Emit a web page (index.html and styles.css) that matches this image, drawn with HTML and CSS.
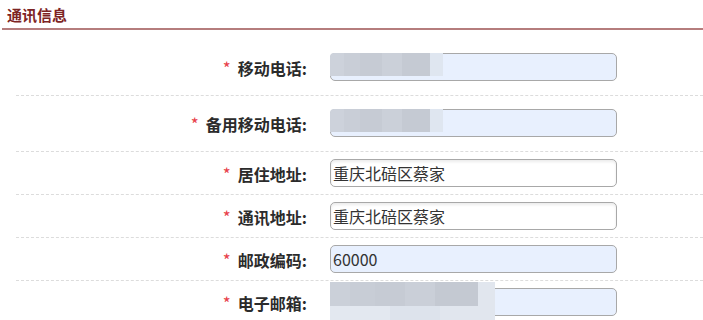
FILE: index.html
```html
<!DOCTYPE html>
<html lang="zh-CN">
<head>
<meta charset="utf-8">
<title>通讯信息</title>
<link rel="stylesheet" href="styles.css">
</head>
<body>
<div class="section">
  <div class="section-title">通讯信息</div>
  <div class="form">
    <div class="row row-tall">
      <label class="label"><span class="req">*</span>移动电话:</label>
      <div class="field">
        <input class="input filled" type="text" value="">
        <div class="mask mask-phone"></div>
      </div>
    </div>
    <div class="row row-tall">
      <label class="label"><span class="req">*</span>备用移动电话:</label>
      <div class="field">
        <input class="input filled" type="text" value="">
        <div class="mask mask-phone"></div>
      </div>
    </div>
    <div class="row">
      <label class="label"><span class="req">*</span>居住地址:</label>
      <div class="field">
        <input class="input plain" type="text" value="重庆北碚区蔡家">
      </div>
    </div>
    <div class="row">
      <label class="label"><span class="req">*</span>通讯地址:</label>
      <div class="field">
        <input class="input plain" type="text" value="重庆北碚区蔡家">
      </div>
    </div>
    <div class="row">
      <label class="label"><span class="req">*</span>邮政编码:</label>
      <div class="field">
        <input class="input filled" type="text" value="60000">
      </div>
    </div>
    <div class="row row-last">
      <label class="label"><span class="req">*</span>电子邮箱:</label>
      <div class="field">
        <input class="input filled" type="text" value="">
        <div class="mask mask-mail-low"></div>
        <div class="mask mask-mail"></div>
      </div>
    </div>
  </div>
</div>
</body>
</html>
```
FILE: styles.css
```css
html, body {
  margin: 0;
  padding: 0;
  background: #fff;
  overflow: hidden;
}
body {
  font-family: "Noto Sans CJK SC", "Microsoft YaHei", sans-serif;
  color: #333;
}
.section {
  margin-left: 2px;
}
.section-title {
  font-size: 15px;
  font-weight: bold;
  line-height: 20px;
  color: #7d2424;
  padding: 5px 0 3px 5px;
  border-bottom: 2px solid #b57d7d;
}
.form {
  margin-top: 10px;
  margin-left: 14px;
}
.row {
  display: grid;
  grid-template-columns: 291px 287px;
  column-gap: 23px;
  align-items: center;
  padding: 7px 0;
  border-bottom: 1px dashed #dcdcdc;
}
.row-tall {
  padding: 13px 0 14px;
}
.row-last {
  border-bottom: none;
}
.label {
  text-align: right;
  font-size: 16px;
  font-weight: bold;
  line-height: 20px;
  color: #2b2b2b;
  white-space: nowrap;
  padding-top: 2px;
}
.req {
  color: #e8414a;
  font-weight: normal;
  font-size: 17px;
  margin-right: 7px;
}
.field {
  position: relative;
  height: 28px;
}
.input {
  box-sizing: border-box;
  width: 287px;
  height: 28px;
  margin: 0;
  padding: 0 2px;
  border: 1px solid #a8a8a8;
  border-radius: 5px;
  font-family: "Noto Sans CJK SC", "Microsoft YaHei", sans-serif;
  font-size: 16px;
  color: #333;
  outline: none;
}
.input.filled {
  background: #e8f0fe;
}
.input.plain {
  background: #fff;
  box-shadow: inset 0 2px 3px rgba(0, 0, 0, 0.08);
}
.mask {
  position: absolute;
  pointer-events: none;
}
.mask-phone {
  left: 0;
  top: 0;
  width: 113px;
  height: 23px;
  border-top-left-radius: 4px;
  background: linear-gradient(to right,
    #cdd2db 0 14px, #c9ced7 14px 30px, #c6cbd4 30px 52px,
    #cbd0d9 52px 72px, #c5cad3 72px 100px, #dfe6f0 100px 113px);
}
.mask-mail {
  left: 0;
  top: -6px;
  width: 148px;
  height: 24px;
  background: linear-gradient(to right,
    #cbd0d9 0 20px, #c8cdd6 20px 45px, #c6cbd4 45px 75px,
    #cacfd8 75px 105px, #c4c9d2 105px 148px);
}
.mask-mail-low {
  left: 0;
  top: -6px;
  width: 165px;
  height: 40px;
  background: linear-gradient(to right,
    #e3e8f0 0 60px, #dde3ec 60px 110px, #e1e6ee 110px 165px);
}
```
